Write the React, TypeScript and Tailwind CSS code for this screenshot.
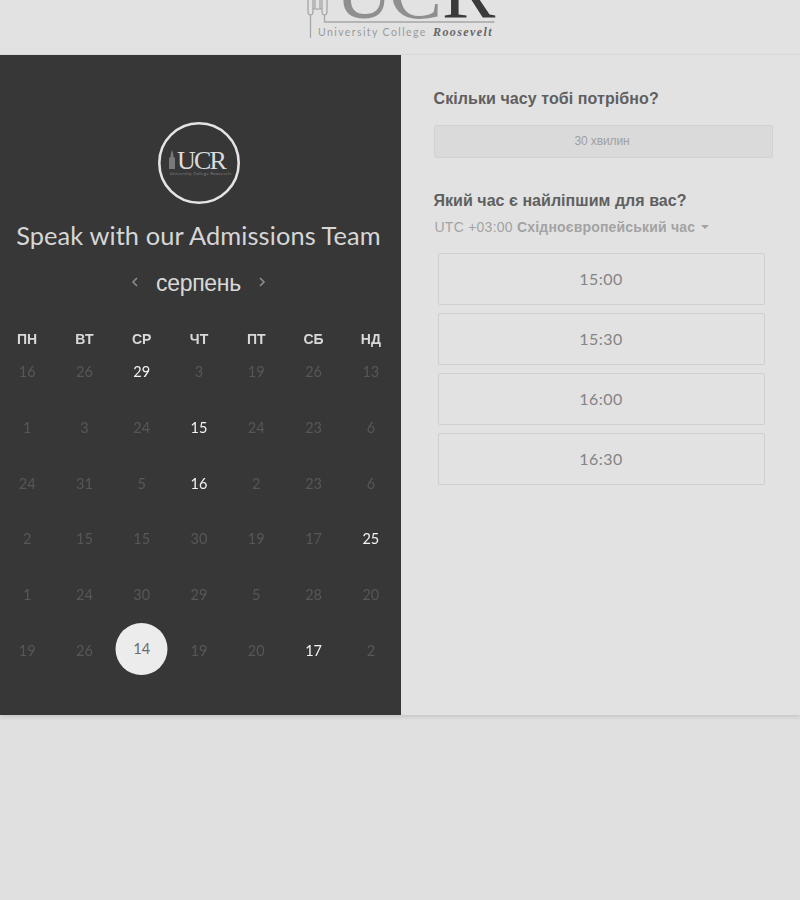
const weekdays = ["ПН", "ВТ", "СР", "ЧТ", "ПТ", "СБ", "НД"];

const rows: string[][] = [
  ["16", "26", "29", "3", "19", "26", "13"],
  ["1", "3", "24", "15", "24", "23", "6"],
  ["24", "31", "5", "16", "2", "23", "6"],
  ["2", "15", "15", "30", "19", "17", "25"],
  ["1", "24", "30", "29", "5", "28", "20"],
  ["19", "26", "14", "19", "20", "17", "2"],
];

const active: Record<string, boolean> = {
  "0-2": true,
  "1-3": true,
  "2-3": true,
  "3-6": true,
  "5-5": true,
};

const times = ["15:00", "15:30", "16:00", "16:30"];

function Logo() {
  return (
    <svg width="200" height="45" viewBox="0 0 200 45" className="shrink-0">
      <g fill="none" stroke="#a6a6a6" strokeWidth="1.3">
        <path d="M8 0v11c0 2.500 1 4 2.500 4S13 13.500 13 11V0M10.500 15v23" />
        <path d="M13 8c2 1.500 7 1.500 9 0M15 0v8M20 0v8" />
        <path d="M22 0v11c0 2.500 1 4 2.500 4S27 13.500 27 11V0M24.500 15v7h170" />
      </g>
      <text x="35" y="18" fontFamily="'Liberation Serif', serif" fontSize="80" letterSpacing="-4" fill="#8f8f8f">
        UC
      </text>
      <text x="142" y="18" fontFamily="'Liberation Serif', serif" fontSize="80" fill="#3a3a3a">
        R
      </text>
      <text x="18" y="36" fontFamily="Lato, sans-serif" fontSize="10.500" letterSpacing="1.400" fill="#9a9a9a">
        University College
      </text>
      <text x="133" y="36" fontFamily="'Liberation Serif', serif" fontSize="12" fontWeight="700" fontStyle="italic" letterSpacing="1.400" fill="#666666">
        Roosevelt
      </text>
    </svg>
  );
}

function RoundLogo() {
  return (
    <svg width="82" height="82" viewBox="0 0 82 82" className="shrink-0">
      <circle cx="41" cy="41" r="39.700" fill="none" stroke="#e4e4e4" strokeWidth="2.600" />
      <path d="M11 47V36l1.500-1 .5-4 1-3 1 3 .5 4 1.500 1v11z" fill="#7a7a7a" />
      <text x="19" y="46.500" fontFamily="'Liberation Serif', serif" fontSize="26" letterSpacing="-1.800" fill="#dcdcdc">
        UCR
      </text>
      <text x="12" y="53" fontFamily="Lato, sans-serif" fontSize="4" letterSpacing="0.400" fill="#858585">
        University College Roosevelt
      </text>
    </svg>
  );
}

export default function App() {
  return (
    <div className="min-h-[900px] bg-[#e0e0e0] font-['Liberation_Sans',sans-serif] blur-[0.5px]">
      <header className="flex h-[55px] items-start justify-center overflow-hidden border-b border-[#dcdcdc] bg-[#e2e2e2]">
        <Logo />
      </header>
      <main className="flex h-[660px] shadow-[0_2px_4px_rgba(0,0,0,0.12)]">
        <section className="flex w-[401px] shrink-0 flex-col items-center bg-[#373737] pt-[67px]">
          <div className="-translate-x-[2px]">
            <RoundLogo />
          </div>
          <h1 className="mt-[13px] -translate-x-[2px] whitespace-nowrap font-['Lato',sans-serif] text-[25.4px] leading-[36px] tracking-[0.1px] text-[#d6d6d6]">
            Speak with our Admissions Team
          </h1>
          <div className="mt-[14px] flex h-[32px] -translate-x-[2px] items-center gap-[17px]">
            <svg width="8" height="12" viewBox="0 0 8 12" fill="none" stroke="#8c8c8c" strokeWidth="1.6" className="-translate-y-[1px]">
              <path d="M6 2 2 6l4 4" />
            </svg>
            <span className="text-[23px] leading-[32px] tracking-[-0.3px] text-[#d8d8d8]">серпень</span>
            <svg width="8" height="12" viewBox="0 0 8 12" fill="none" stroke="#8c8c8c" strokeWidth="1.6" className="-translate-y-[1px]">
              <path d="M2 2l4 4-4 4" />
            </svg>
          </div>
          <div className="mt-[29px] w-[401px] -translate-x-[1.5px]">
            <div className="grid h-[24px] grid-cols-7 items-start text-center text-[14px] font-bold leading-[22px] text-[#d9d9d9]">
              {weekdays.map((d) => (
                <span key={d}>{d}</span>
              ))}
            </div>
            {rows.map((row, r) => (
              <div key={r} className="grid h-[55.8px] grid-cols-7 items-start text-center font-['Lato',sans-serif] text-[14.5px] leading-[39px]">
                {row.map((n, c) => {
                  if (r === 5 && c === 2) {
                    return (
                      <div key={c} className="relative h-[40px]">
                        <span className="absolute left-1/2 top-[-8px] flex h-[52px] w-[52px] -translate-x-1/2 items-center justify-center rounded-full bg-[#ececec] leading-[48px] text-[#6a6a6a]">
                          {n}
                        </span>
                      </div>
                    );
                  }
                  return (
                    <span key={c} className={active[`${r}-${c}`] ? "text-[#f2f2f2]" : "text-[#575757]"}>
                      {n}
                    </span>
                  );
                })}
              </div>
            ))}
          </div>
        </section>
        <section className="flex-1 bg-[#e2e2e2] pl-[32.5px] pr-[28px] pt-[34px]">
          <h2 className="text-[16px] font-bold leading-[20px] tracking-[0.08px] text-[#5f5f5f]">Скільки часу тобі потрібно?</h2>
          <div className="mt-[16px] flex h-[33px] w-[339px] items-center justify-center rounded-[2px] border border-[#d2d2d2] bg-[#dadada] text-[12px] text-[#a0a0a0]">
            <span className="-translate-x-[1px] -translate-y-[1px] tracking-[-0.1px]">30 хвилин</span>
          </div>
          <h2 className="mt-[33px] text-[16px] font-bold leading-[20px] tracking-[0.04px] text-[#5f5f5f]">Який час є найліпшим для вас?</h2>
          <div className="ml-[1px] mt-[6px] flex h-[20px] items-center gap-[6px] text-[14px] tracking-[0.25px] text-[#a3a3a3]">
            <span>
              UTC +03:00 <span className="font-bold tracking-[0.18px]">Східноєвропейський час</span>
            </span>
            <svg width="8" height="4" viewBox="0 0 8 4" fill="#a3a3a3">
              <path d="M0 0h8L4 4z" />
            </svg>
          </div>
          <div className="ml-[4px] mt-[16px] flex w-[327px] flex-col gap-[8px]">
            {times.map((t) => (
              <div
                key={t}
                className="flex h-[52px] items-center justify-center rounded-[2px] border border-[#cfcfcf] pb-[1px] font-['Lato',sans-serif] text-[16px] tracking-[0.5px] text-[#858585]"
              >
                {t}
              </div>
            ))}
          </div>
        </section>
      </main>
    </div>
  );
}
